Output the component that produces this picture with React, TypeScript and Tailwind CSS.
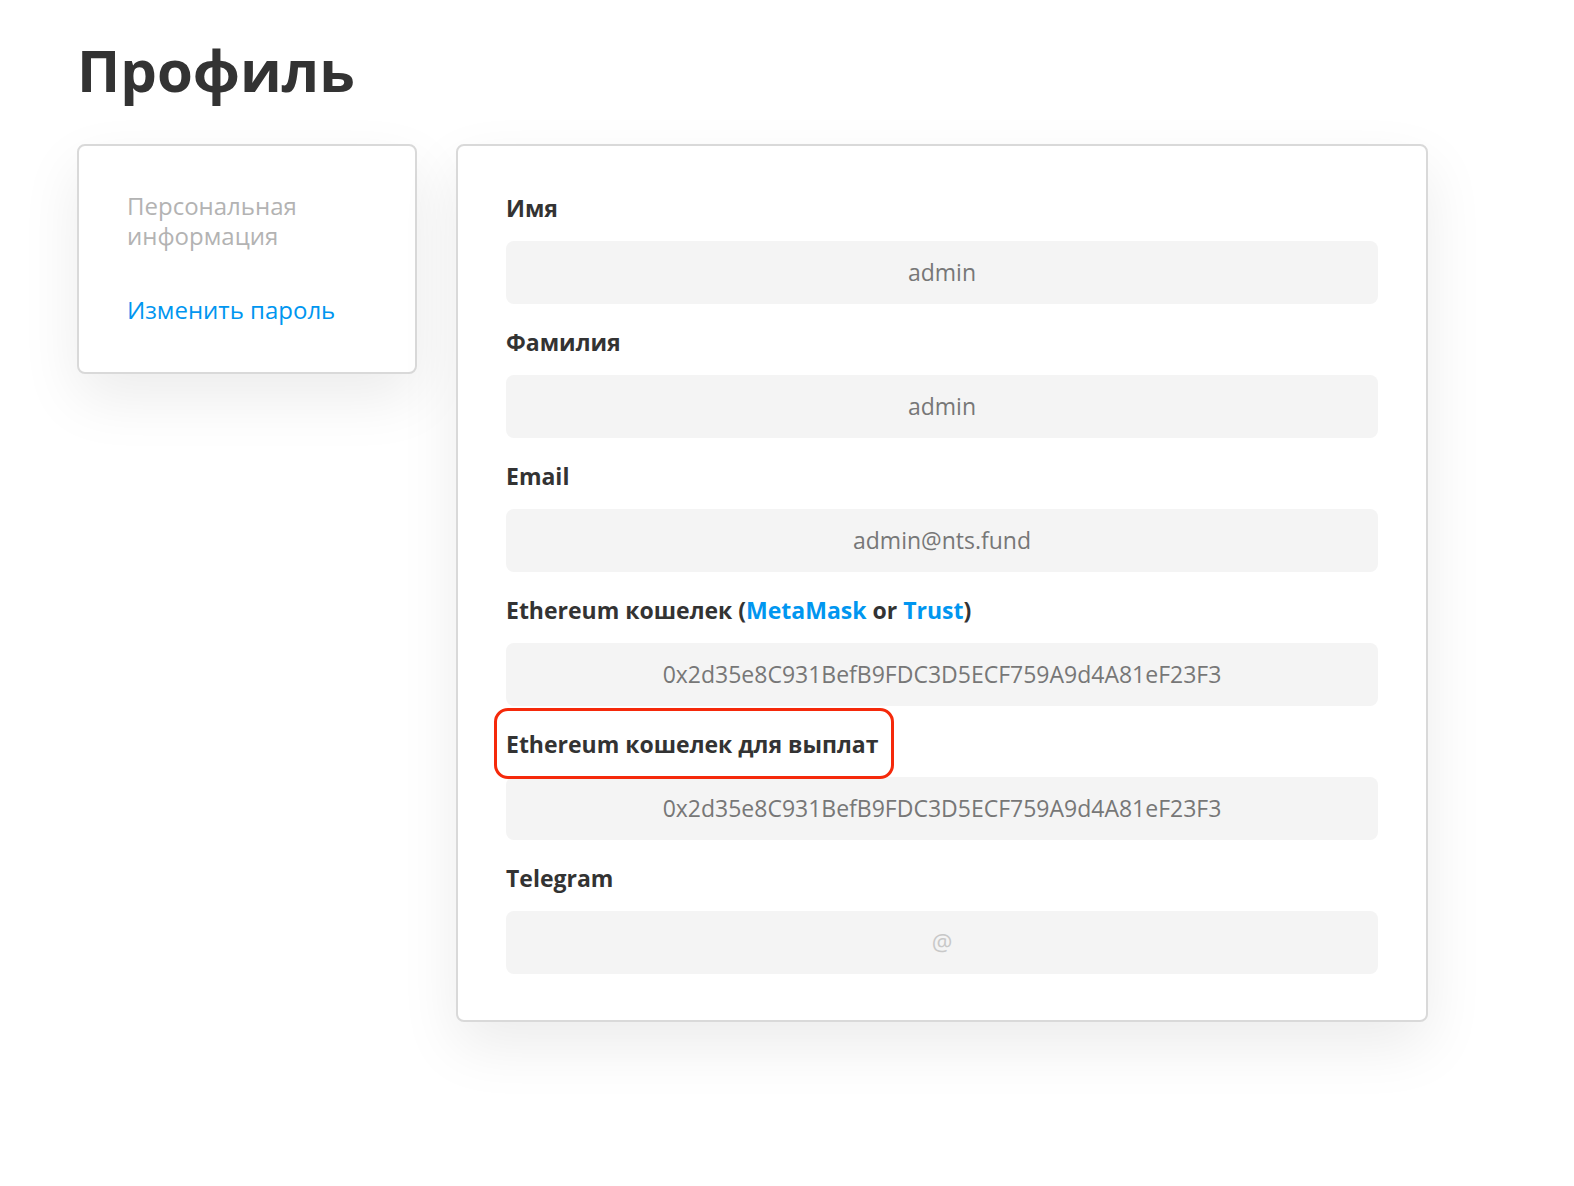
const FIELDS = [
  { id: "first", label: "Имя", value: "admin" },
  { id: "last", label: "Фамилия", value: "admin" },
  { id: "email", label: "Email", value: "admin@nts.fund" },
  {
    id: "wallet",
    label: "wallet",
    value: "0x2d35e8C931BefB9FDC3D5ECF759A9d4A81eF23F3",
  },
  {
    id: "payout",
    label: "Ethereum кошелек для выплат",
    value: "0x2d35e8C931BefB9FDC3D5ECF759A9d4A81eF23F3",
  },
  { id: "telegram", label: "Telegram", value: "" },
];

function Label({ id, label }: { id: string; label: string }) {
  if (id === "wallet") {
    return (
      <div className="text-[23px] leading-[30px] font-bold text-[#333]">
        Ethereum кошелек (
        <span className="text-[#0096f0]">MetaMask</span> or{" "}
        <span className="text-[#0096f0]">Trust</span>)
      </div>
    );
  }

  if (id === "payout") {
    return (
      <div className="relative w-fit text-[23px] leading-[30px] font-bold text-[#333]">
        {label}
        {/* highlight annotation */}
        <div className="absolute -left-[12px] -right-[16px] -top-[21px] -bottom-[20px] rounded-[14px] border-[3px] border-[#f5290a]" />
      </div>
    );
  }

  return (
    <div className="text-[23px] leading-[30px] font-bold text-[#333]">
      {label}
    </div>
  );
}

export default function App() {
  return (
    <main
      className="min-h-screen bg-white px-[77px] pt-[30px]"
      style={{ fontFamily: '"Open Sans", "Noto Sans", sans-serif' }}
    >
      {/* HEADER */}
      <h1 className="text-[58px] leading-[80px] font-bold text-[#333] mb-[34px]">
        Профиль
      </h1>

      <div className="flex items-start gap-[39px]">
        {/* SIDE MENU */}
        <aside className="w-[340px] rounded-[8px] border-2 border-[#d9d9d9] bg-white px-[48px] pt-[45px] pb-[47px] shadow-[0_24px_60px_rgba(0,0,0,0.08)]">
          <div className="text-[24px] leading-[30px] text-[#b3b3b3]">
            Персональная информация
          </div>
          <div className="mt-[44px] text-[24px] leading-[30px] text-[#0096f0]">
            Изменить пароль
          </div>
        </aside>

        {/* FORM */}
        <section className="w-[972px] rounded-[8px] border-2 border-[#d9d9d9] bg-white px-[48px] pt-[47px] pb-[46px] shadow-[0_24px_60px_rgba(0,0,0,0.08)]">
          <div className="flex flex-col gap-[23px]">
            {FIELDS.map((f) => (
              <div key={f.id}>
                <Label id={f.id} label={f.label} />
                <div className="mt-[18px] flex h-[63px] items-center justify-center rounded-[8px] bg-[#f4f4f4] text-[23px] text-[#777]">
                  {f.value ? (
                    f.value
                  ) : (
                    <span className="text-[#c8c8c8]">@</span>
                  )}
                </div>
              </div>
            ))}
          </div>
        </section>
      </div>
    </main>
  );
}
